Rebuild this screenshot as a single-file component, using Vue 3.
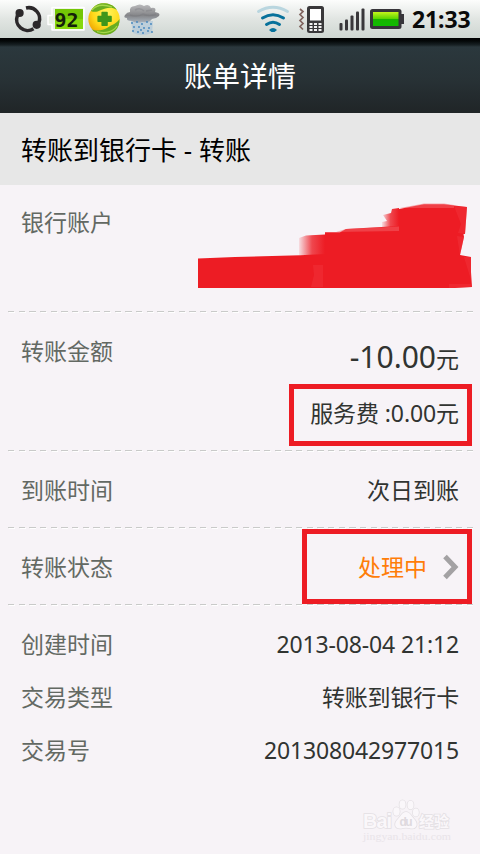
<script setup>
const bars = [
  { x: 339.5, y: 23 },
  { x: 345, y: 19.5 },
  { x: 350.5, y: 15.5 },
  { x: 356, y: 11.5 },
  { x: 361.5, y: 8.5 },
]
const rain = [
  [132, 23], [137, 22], [142, 24], [147, 22], [151, 24],
  [134, 27], [139, 27], [144, 28], [149, 28], [133, 31],
  [138, 32], [143, 33], [148, 31], [152, 32], [141, 30],
]
const facts = [
  { label: '创建时间', value: '2013-08-04 21:12' },
  { label: '交易类型', value: '转账到银行卡' },
  { label: '交易号', value: '201308042977015' },
]
</script>

<template>
  <div class="screen">
    <div class="status">
      <svg width="44" height="38" viewBox="0 0 44 38">
        <g fill="none" stroke="#2b282a" stroke-width="3.5">
          <path d="M17.400 15.500A11 11 0 0 0 33.500 28.800" />
          <path d="M38.900 22.500A11 11 0 0 0 26 8" />
        </g>
        <circle cx="19.600" cy="13" r="4.100" fill="#2b282a" />
        <circle cx="36.700" cy="24.800" r="4.100" fill="#2b282a" />
      </svg>
      <svg width="43" height="38" viewBox="44 0 43 38">
        <path d="M52 7.500h32v22.500h-32v-5.500h-4v-9h4z" fill="#e8efe3" stroke="#fff" stroke-width="1.500" stroke-linejoin="round" />
        <rect x="55" y="9" width="28" height="20" fill="#86d80c" />
        <rect x="55" y="9" width="28" height="10" fill="#74c606" />
        <text class="charge" x="54.500" y="26.500" textLength="24">92</text>
      </svg>
      <svg width="35" height="38" viewBox="87 0 35 38">
        <defs>
          <radialGradient id="gold" cx="0.6" cy="0.3" r="0.75">
            <stop offset="0" stop-color="#fff45a" />
            <stop offset="0.6" stop-color="#ffd91a" />
            <stop offset="1" stop-color="#eda000" />
          </radialGradient>
        </defs>
        <circle cx="104" cy="19" r="15.700" fill="url(#gold)" />
        <path d="M91 11C95 4 100 3 105 3.300C111 4 114 6 117 10C111 6 106 8 101 10C97 12 94 12.500 91 11Z" fill="#68ad21" />
        <path d="M92 10C96 5 103 4 112 7" fill="none" stroke="#a7d84a" stroke-width="1.300" />
        <path d="M119.500 19C120 29 113 35 104 34.700C98 34.500 94 32 91.500 29C97 32 103 30 107 28C113 24 116 24 119.500 19Z" fill="#68ad21" />
        <path d="M117 26C113 32 105 34 97 31.500" fill="none" stroke="#a7d84a" stroke-width="1.300" />
        <path d="M102.200 12.500h4.800v4h4v4.800h-4v4h-4.800v-4h-4v-4.800h4z" fill="#3f961b" stroke="#3f961b" stroke-width="1.600" stroke-linejoin="round" />
      </svg>
      <svg width="40" height="38" viewBox="122 0 40 38">
        <defs>
          <linearGradient id="cloud" x1="0" y1="0" x2="0" y2="1">
            <stop offset="0" stop-color="#b9b9bb" />
            <stop offset="0.6" stop-color="#858689" />
            <stop offset="1" stop-color="#a9b3bd" />
          </linearGradient>
        </defs>
        <path d="M131 21h22l-1 12q-10 4-19 0z" fill="#a9c3d9" opacity="0.6" />
        <path d="M125 15q2-3 5-3q-1-6 5-6q5-3 9 0q5-3 7 2q6-1 4 4q6 1 4 4q-3 3-7 3q-3 4-9 3q-7 2-11-1q-6 0-5-3q-4 0-2-3z" fill="url(#cloud)" />
        <path d="M130 15q7 3 13-1q6 3 13 0M135 10q5-3 9 1M146 11l6-1" fill="none" stroke="#707276" stroke-width="1.500" opacity="0.3" />
        <circle v-for="(r, i) in rain" :key="i" :cx="r[0]" :cy="r[1]" r="0.900" fill="#3f83bd" />
      </svg>
      <span class="spacer"></span>
      <svg width="44" height="38" viewBox="252 0 44 38">
        <g fill="none" stroke="#07719b" stroke-width="3" stroke-linecap="round">
          <path d="M258.500 11.500Q273 3 287.500 11.500" stroke="#b9d6df" />
          <path d="M262.500 18Q273 11.300 283.500 18" />
          <path d="M266.500 24.500Q273 20 279.500 24.500" />
        </g>
        <path d="M269 30q4-4 8 0l-2.500 2h-3z" fill="#07719b" />
      </svg>
      <svg width="38" height="38" viewBox="296 0 38 38">
        <path d="M300 9l3 2.500l-3 3l3 3l-3 3l3 3l-3 3l3 3" fill="none" stroke="#80645f" stroke-width="1.700" />
        <rect x="307" y="6" width="17" height="27" rx="2.500" fill="#39383a" />
        <rect x="310" y="9" width="11" height="11.500" fill="#fff" />
        <path d="M309.500 23h3v2h-3zM314 23h3v2h-3zM318.500 23h3v2h-3zM309.500 26h3v2h-3zM314 26h3v2h-3zM318.500 26h3v2h-3zM309.500 29h3v2h-3zM314 29h3v2h-3zM318.500 29h3v2h-3z" fill="#f2f2f2" />
      </svg>
      <svg width="34" height="38" viewBox="334 0 34 38">
        <rect v-for="b in bars" :key="b.x" :x="b.x" :y="b.y" width="3" :height="30.500 - b.y" rx="1" fill="#39373a" />
      </svg>
      <svg width="44" height="38" viewBox="368 0 44 38">
        <defs>
          <linearGradient id="juice" x1="0" y1="0" x2="0" y2="1">
            <stop offset="0" stop-color="#c4f51c" />
            <stop offset="0.480" stop-color="#5bd500" />
            <stop offset="0.520" stop-color="#18b400" />
            <stop offset="1" stop-color="#10bd00" />
          </linearGradient>
        </defs>
        <rect x="370" y="9" width="31.500" height="20" rx="2.500" fill="#37353a" />
        <rect x="401" y="14" width="3" height="10" fill="#37353a" />
        <rect x="373" y="12" width="25.500" height="14" fill="url(#juice)" />
      </svg>
      <span class="clock">21:33</span>
    </div>

    <header class="title">账单详情</header>
    <div class="subject">转账到银行卡 - 转账</div>

    <section class="row account">
      <span class="label">银行账户</span>
      <svg class="scribble" width="275" height="86" viewBox="197 203 275 86">
        <defs>
          <linearGradient id="fade" x1="0" y1="0" x2="1" y2="0">
            <stop offset="0" stop-color="#ed1c24" stop-opacity="0.100" />
            <stop offset="0.500" stop-color="#ed1c24" stop-opacity="0.800" />
            <stop offset="1" stop-color="#ed1c24" />
          </linearGradient>
        </defs>
        <path d="M198 258.500L235 257L300 255.300L325 254V232.300H340L346 229L399 226V209L424 204.300H444L467 207L465 234H463.500L464 237L460 255L471 257V272L472 287L455 288H198Z" fill="#ed1c24" />
        <path d="M299 238L306 235.500L325 234.500V255H299Z" fill="url(#fade)" />
        <path d="M392 209L399 208V228H382V222L387 221L383 215L391 213Z" fill="url(#fade)" />
        <path d="M454 206L467 207L465 234L458 233L461 224ZM457 236L464 237L460 255ZM464 257L471 257V280ZM449 284V288L472 287L471 284ZM313 265h10v22h-12l3-12z" fill="#f23a42" opacity="0.400" />
        <path d="M336 232L346 229L399 226.500V231ZM400 208L424 203.500L444 203.500L454 205V208Z" fill="#f4636a" opacity="0.500" />
      </svg>
    </section>

    <section class="row amount">
      <span class="label">转账金额</span>
      <div class="money">
        <div class="total"><span class="big">-10.00</span>元</div>
        <div class="fee">服务费 :0.00元</div>
      </div>
    </section>

    <section class="row arrival">
      <span class="label">到账时间</span>
      <span class="value">次日到账</span>
    </section>

    <section class="row state">
      <span class="label">转账状态</span>
      <span class="pending">处理中</span>
      <svg class="chevron" width="16" height="26" viewBox="0 0 16 26">
        <path d="M2 2.500L12 13L2 23.500" fill="none" stroke="#a3a1a3" stroke-width="5" />
      </svg>
    </section>

    <section class="facts">
      <div v-for="f in facts" :key="f.label" class="fact">
        <span class="label">{{ f.label }}</span>
        <span class="value">{{ f.value }}</span>
      </div>
    </section>

    <div class="mark fee-mark"></div>
    <div class="mark state-mark"></div>

    <svg class="watermark" width="100" height="48" viewBox="360 798 100 48">
      <g class="outlined">
        <text class="brand" x="363" y="827.500" textLength="29">Bai</text>
        <ellipse cx="396.500" cy="811.500" rx="3.200" ry="4.200" />
        <ellipse cx="402.500" cy="804.500" rx="3" ry="4.300" />
        <ellipse cx="410.500" cy="805" rx="3" ry="4.300" />
        <ellipse cx="415.800" cy="812.500" rx="3" ry="4" />
        <path d="M406 812C410 812 412 817 415 820C419 826 415 829 411 828.500Q406 827 401 828.500C395 829 393 824 398 819C401 816 402 812 406 812Z" />
        <text class="cn" x="419" y="826.500" textLength="30">经验</text>
      </g>
      <text class="du" x="399.500" y="826" textLength="13">du</text>
      <text class="site" x="363" y="840" textLength="88" lengthAdjust="spacingAndGlyphs">jingyan.baidu.com</text>
    </svg>
  </div>
</template>

<style>
body {
  background: #f7f3f7;
}
</style>

<style scoped>
.screen {
  position: relative;
  width: 480px;
  height: 854px;
  overflow: hidden;
  background: #f7f3f7;
  color: #313431;
  font-family: "Noto Sans", "Noto Sans CJK SC", sans-serif;
  font-size: 23px;
  line-height: 30px;
}
svg {
  display: block;
  flex: none;
}
.status {
  display: flex;
  height: 38px;
  background: linear-gradient(#fcfdfc, #e1e5e2 50%, #ced6d1);
}
.spacer {
  flex: 1;
}
.clock {
  width: 68px;
  color: #0a0a0a;
  font-family: "Noto Sans", sans-serif;
  font-size: 23px;
  font-weight: 700;
  line-height: 39px;
  letter-spacing: -0.1px;
}
.charge {
  font: 700 20px "DejaVu Sans Mono", monospace;
  fill: #14200a;
}
.title {
  height: 75px;
  box-sizing: border-box;
  padding-top: 1px;
  background: linear-gradient(#000, #040808 3px, #182124 7px, #2b383d 9px, #283236 40px, #202527);
  color: #fff;
  font-size: 28px;
  line-height: 75px;
  text-align: center;
}
.subject {
  height: 72px;
  padding-left: 21px;
  background: #e7e7e7;
  color: #000;
  font-size: 26px;
  line-height: 75px;
}
.row {
  position: relative;
  display: flex;
  box-sizing: border-box;
  padding: 0 21px;
}
.row::after {
  content: "";
  position: absolute;
  left: 8px;
  right: 7px;
  bottom: 0;
  height: 2px;
  background:
    repeating-linear-gradient(90deg, #c9cac9 0 6.3px, transparent 6.3px 10.667px) 0 0 / 100% 1px no-repeat,
    repeating-linear-gradient(90deg, transparent 0 1px, #fff 1px 7px, transparent 7px 10.667px) 0 1px / 100% 1px no-repeat;
}
.label {
  color: #636963;
  margin-right: auto;
}
.account {
  height: 128px;
  padding-top: 22px;
  padding-right: 8px;
}
.scribble {
  margin-top: -4px;
}
.amount {
  height: 139px;
  padding-top: 23px;
}
.money {
  text-align: right;
}
.total {
  height: 56px;
  margin-top: 6px;
}
.big {
  font-size: 30px;
}
.fee {
  letter-spacing: -0.1px;
}
.arrival {
  height: 77px;
  padding-top: 23px;
}
.state {
  height: 77px;
  padding-top: 23px;
}
.pending {
  margin-right: 16px;
  color: #ff7d08;
}
.chevron {
  margin-top: 2px;
}
.facts {
  display: flex;
  flex-direction: column;
  gap: 23px;
  padding: 23px 21px 0;
}
.fact {
  display: flex;
}
.facts .value {
  letter-spacing: -0.15px;
}
.mark {
  position: absolute;
  box-sizing: border-box;
  border: 5px solid #ed1c24;
}
.fee-mark {
  left: 289px;
  top: 384px;
  width: 183px;
  height: 62px;
}
.state-mark {
  left: 302px;
  top: 529px;
  width: 170px;
  height: 75px;
}
.watermark {
  position: absolute;
  left: 360px;
  top: 798px;
}
.outlined {
  fill: #faf7fa;
  stroke: #e4e0e4;
  stroke-width: 1.6px;
  paint-order: stroke;
}
.brand {
  font: 700 20px "Liberation Sans", sans-serif;
}
.cn {
  font: 700 15px "Noto Sans CJK SC", sans-serif;
}
.du {
  font: 700 12px "Liberation Sans", sans-serif;
  fill: #dedade;
}
.site {
  font: 10px "Liberation Serif", serif;
  fill: #e9e4e9;
}
</style>
